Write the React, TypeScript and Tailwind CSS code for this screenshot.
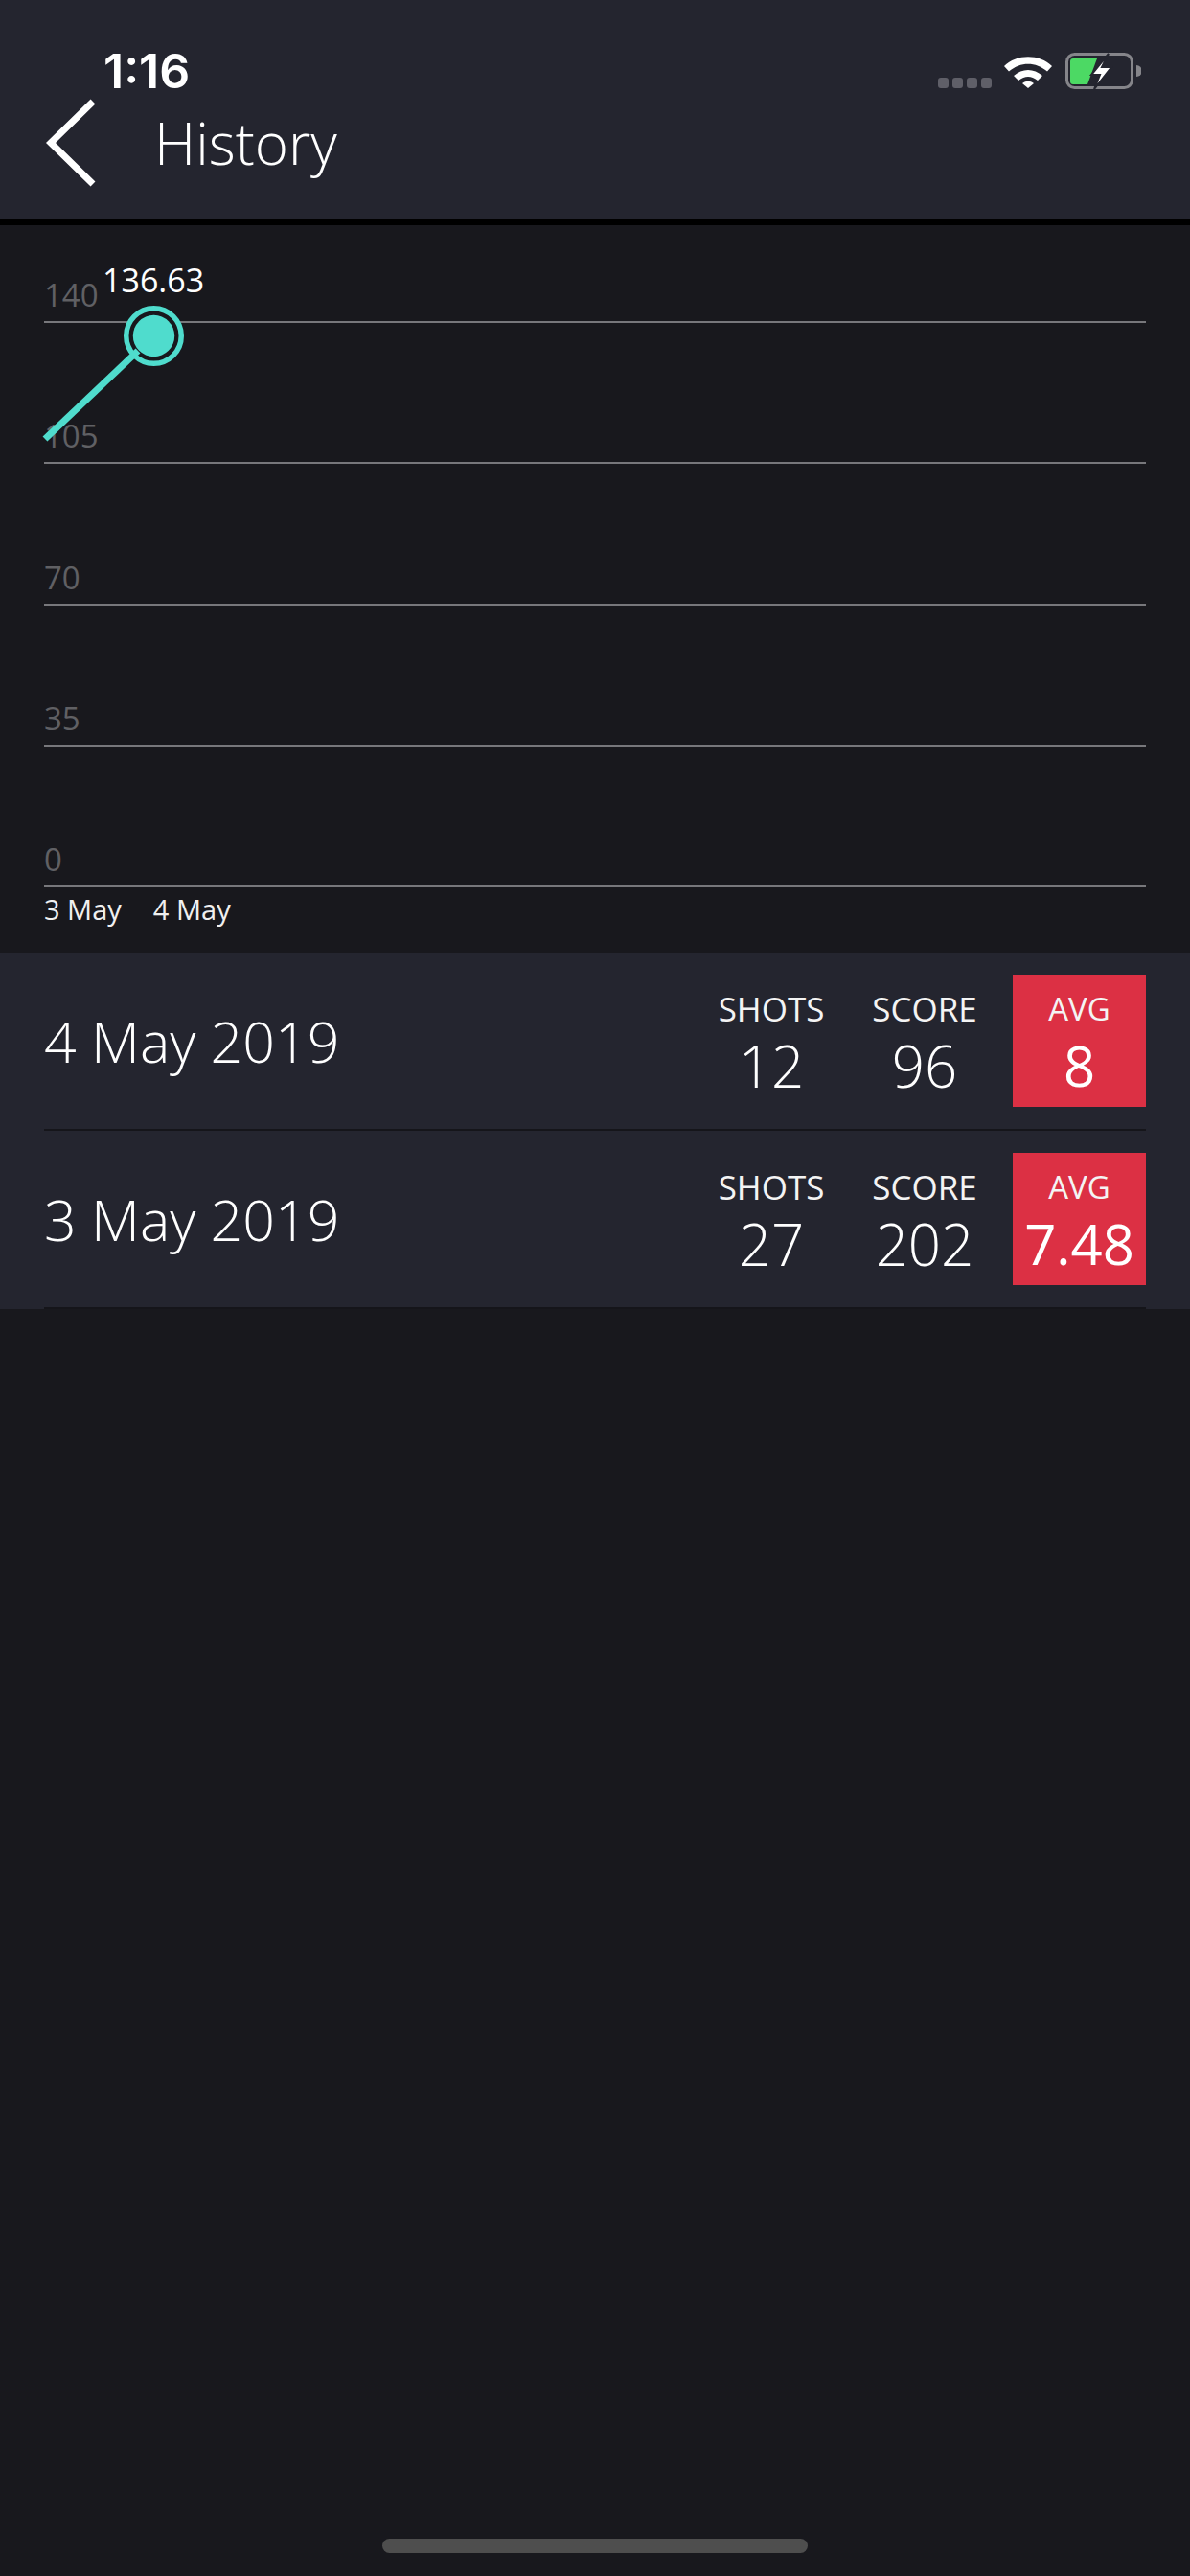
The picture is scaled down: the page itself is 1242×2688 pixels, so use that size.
const gridLabels = ["140", "105", "70", "35", "0"];

const sessions = [
  { date: "4 May 2019", shots: "12", score: "96", avg: "8" },
  { date: "3 May 2019", shots: "27", score: "202", avg: "7.48" },
];

function StatusIcons() {
  return (
    <div className="mt-[6px] flex items-start">
      <div className="mt-[26px] flex gap-[4px]">
        {[0, 1, 2, 3].map((dot) => (
          <div key={dot} className="h-[11px] w-[11px] rounded-[3px] bg-[#5f5f68]" />
        ))}
      </div>
      <svg className="ml-[13px] mt-[1px]" width="50" height="36" viewBox="0 0 50 36">
        <path d="M0 13C13 0 37 0 50 13L45 18.5C33 8 17 8 5 18.5Z" fill="#fff" />
        <path d="M10 23C19 15 31 15 40 23L35 28C28 22.5 22 22.5 15 28Z" fill="#fff" />
        <path d="M19 31C23 28 27 28 31 31L25 36Z" fill="#fff" />
      </svg>
      <svg className="ml-[14px]" width="79" height="38" viewBox="0 0 79 38">
        <rect x="1.5" y="1.5" width="68" height="35" rx="8" fill="none" stroke="#85858a" strokeWidth="3" />
        <path d="M5 9a3 3 0 0 1 3-3H33L23 33H8a3 3 0 0 1-3-3Z" fill="#4cd964" />
        <path d="M74 13a6 6 0 0 1 0 12Z" fill="#85858a" />
        <path d="M45 1L27 23H36L30 38L48 15H38Z" fill="#fff" stroke="#24252f" strokeWidth="2" />
      </svg>
    </div>
  );
}

function Chart() {
  return (
    <div className="relative h-[759px] shrink-0 bg-[#18181d] px-[46px] pt-[100px]">
      <div className="flex flex-col">
        {gridLabels.map((label, i) => (
          <div
            key={label}
            className={`relative h-[2px] bg-[#77777b] ${i < gridLabels.length - 1 ? "mb-[145.25px]" : ""}`}
          >
            <span className="absolute bottom-[9px] left-0 text-[33px] leading-[40px] text-[#606064]">{label}</span>
          </div>
        ))}
      </div>
      <div className="mt-[5px] flex gap-[33px] text-[29px] leading-[36px] text-[#f0f0f0]">
        <span>3 May</span>
        <span>4 May</span>
      </div>
      <svg className="absolute left-0 top-0" width="220" height="240" viewBox="0 0 220 240">
        <circle cx="160.5" cy="115.5" r="28.75" fill="#18181d" stroke="#4fdccd" strokeWidth="5.5" />
        <circle cx="160.5" cy="115.5" r="21.7" fill="#4fdccd" />
        <line x1="47" y1="223" x2="144" y2="131" stroke="#4fdccd" strokeWidth="7" />
      </svg>
      <span className="absolute left-[107px] top-[37px] text-[34px] leading-[40px] text-white">136.63</span>
    </div>
  );
}

function Stat({ label, value }: { label: string; value: string }) {
  return (
    <div className="flex h-[138px] w-[110px] flex-col items-center pt-[12px]">
      <span className="text-[35px] leading-[48px] text-[#f4f4f4]">{label}</span>
      <span className="text-[60px] font-light leading-[70px] text-white">{value}</span>
    </div>
  );
}

export default function App() {
  return (
    <div className="flex h-[2688px] w-[1242px] flex-col overflow-hidden bg-[#18181d] font-['Open_Sans',sans-serif]">
      <header className="h-[229px] shrink-0 bg-[#24252f]">
        <div className="flex h-[99px] items-start justify-between pl-[108px] pr-[51px] pt-[49px]">
          <span className="font-['Inter',sans-serif] text-[50px] font-semibold leading-[50px] text-white">1:16</span>
          <StatusIcons />
        </div>
        <div className="flex h-[100px] items-center pl-[46px]">
          <svg width="54" height="96" viewBox="0 0 54 96" fill="none">
            <polyline points="51,5 7,48 51,91" stroke="#fff" strokeWidth="7" />
          </svg>
          <h1 className="ml-[61px] text-[60px] font-light leading-[72px] text-white">History</h1>
        </div>
      </header>
      <div className="h-[6px] shrink-0 bg-black" />
      <Chart />
      <section className="shrink-0 bg-[#24252f] px-[46px]">
        {sessions.map((s) => (
          <div key={s.date} className="flex h-[186px] items-center justify-between border-b-2 border-[#15151a]">
            <span className="text-[59px] font-light leading-[72px] text-white">{s.date}</span>
            <div className="flex items-center">
              <Stat label="SHOTS" value={s.shots} />
              <div className="w-[50px]" />
              <Stat label="SCORE" value={s.score} />
              <div className="ml-[37px] flex h-[138px] w-[139px] flex-col items-center bg-[#dc3044] pt-[12px]">
                <span className="text-[33px] leading-[48px] text-[#f4f4f4]">AVG</span>
                <span className="text-[58px] leading-[70px] text-white">{s.avg}</span>
              </div>
            </div>
          </div>
        ))}
      </section>
      <div className="mt-auto mb-[24px] flex justify-center">
        <div className="h-[15px] w-[444px] rounded-full bg-[#4e4e4e]" />
      </div>
    </div>
  );
}
